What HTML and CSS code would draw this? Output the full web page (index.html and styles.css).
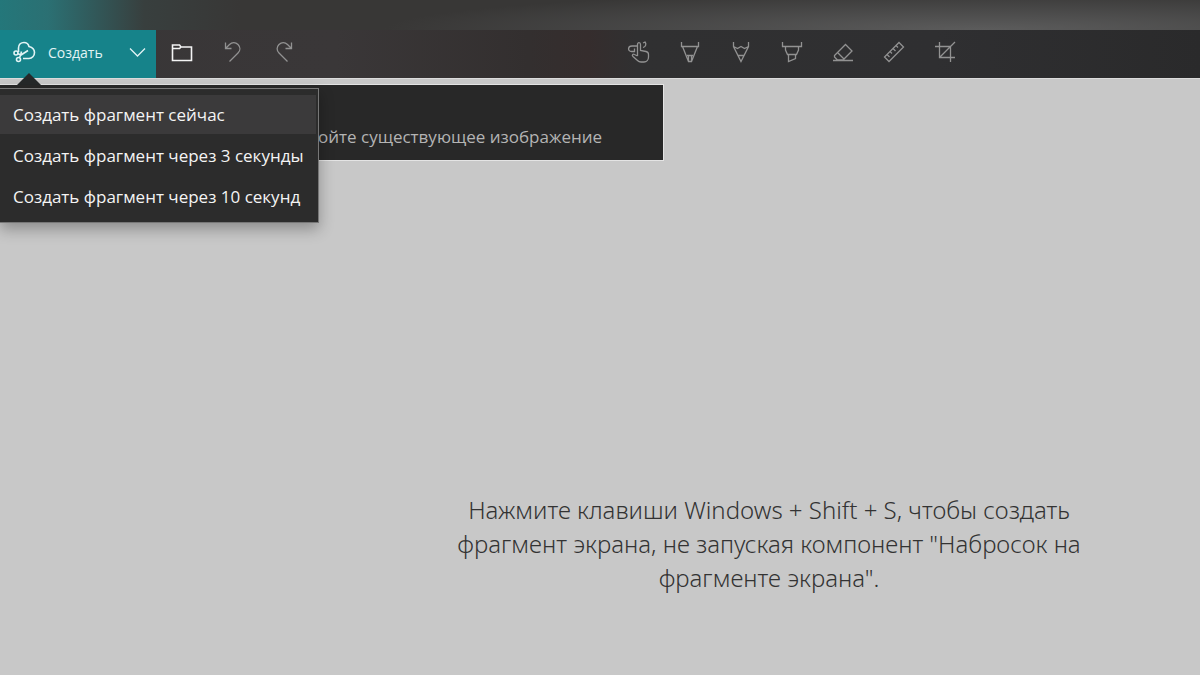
FILE: index.html
```html
<!DOCTYPE html>
<html lang="ru">
<head>
<meta charset="utf-8">
<meta name="viewport" content="width=device-width, initial-scale=1">
<title>Набросок на фрагменте экрана</title>
<link rel="stylesheet" href="styles.css">
</head>
<body>
<div class="app">
  <header class="titlebar"></header>
  <nav class="toolbar">
    <div class="create">
      <button class="create-main" type="button">
        <svg class="icon scissors" viewBox="0 0 24 24" aria-hidden="true">
          <path d="M6.500 12V8C6.500 4.500 9 2.500 12 2.500C15 2.500 16.500 4.500 17 6.500C20.500 7.500 22.500 9.500 22.500 12.500C22.500 16 20 18.500 17 18.500H11"/>
          <path d="M5.500 13.500L9 15L16 10.500M7.500 17.500L8.500 15.500L9.500 11.500"/>
          <circle cx="4" cy="13" r="2"/><circle cx="6.500" cy="19.500" r="2"/>
        </svg>
        <span>Создать</span>
      </button>
      <button class="create-more" type="button" aria-label="Параметры создания" aria-expanded="true">
        <svg class="icon" viewBox="0 0 24 24" aria-hidden="true"><path d="M5 8.500L12.500 16L20 8.500"/></svg>
      </button>
      <div class="menu" role="menu">
        <button class="menu-item active" type="button" role="menuitem">Создать фрагмент сейчас</button>
        <button class="menu-item" type="button" role="menuitem">Создать фрагмент через 3 секунды</button>
        <button class="menu-item" type="button" role="menuitem">Создать фрагмент через 10 секунд</button>
      </div>
    </div>
    <div class="group">
      <button class="tool enabled" type="button" aria-label="Открыть файл">
        <svg class="icon folder" viewBox="0 0 24 24" aria-hidden="true"><path d="M2.500 5H9.500L11 7H21.500V20.500H2.500ZM2.500 8.500H9.500L11 7"/></svg>
      </button>
      <button class="tool" type="button" aria-label="Отменить">
        <svg class="icon" viewBox="0 0 24 24" aria-hidden="true"><path d="M4.500 2.500V8.500H10.500M4.500 8.500L8.500 4.500C11 2 14.500 2 17 4.500C19.500 7 19.500 10.500 17 13L8.500 21.500"/></svg>
      </button>
      <button class="tool" type="button" aria-label="Вернуть">
        <svg class="icon" viewBox="0 0 24 24" aria-hidden="true"><path d="M19.500 2.500V8.500H13.500M19.500 8.500L15.500 4.500C13 2 9.500 2 7 4.500C4.500 7 4.500 10.500 7 13L15.500 21.500"/></svg>
      </button>
    </div>
    <div class="group drawing">
      <button class="tool" type="button" aria-label="Рукописный ввод касанием">
        <svg class="icon" viewBox="0 0 24 24" aria-hidden="true"><path d="M10.500 16V4.500C10.500 2 13.500 2 13.500 4.500V10.500L19 11.500C21 12 21.500 13 21.500 14.500V17C21.500 20 19.500 22 17 22H14C12.500 22 11.500 21.500 10.500 20.500L6 16.500C4.500 15 6 13.500 7.500 14.500L10.500 16M10.500 6H5C.500 6 .500 11.500 4.500 11.500H7.500V8.500M16 3L18 2C19.500 4 19 6.500 16 7.500"/></svg>
      </button>
      <button class="tool" type="button" aria-label="Ручка">
        <svg class="icon" viewBox="0 0 24 24" aria-hidden="true"><path d="M3.500 2V6.500H20.500V2M4.500 6.500L10.500 21.500H13.500L19.500 6.500M9 15.500H15M10.500 16V21.500M13.500 16V21.500"/></svg>
      </button>
      <button class="tool" type="button" aria-label="Карандаш">
        <svg class="icon" viewBox="0 0 24 24" aria-hidden="true"><path d="M4.500 2V6.500L12 21.500L19.500 6.500V2M4.500 6.500L8.500 8.500L12 6.500L15.500 8.500L19.500 6.500M9 15.500H15"/></svg>
      </button>
      <button class="tool" type="button" aria-label="Маркер">
        <svg class="icon" viewBox="0 0 24 24" aria-hidden="true"><path d="M2.500 2V6.500H21.500V2M5.500 6.500V10L7.500 14.500H16.500L18.500 10V6.500M8.500 14.500V21.500L15.500 18.500V14.500"/></svg>
      </button>
      <button class="tool" type="button" aria-label="Ластик">
        <svg class="icon" viewBox="0 0 24 24" aria-hidden="true"><path d="M14.500 4.500L21 11L12 20H6.500L3.500 17V15.500ZM6.500 12.500L13 19M2 20.500H22"/></svg>
      </button>
      <button class="tool" type="button" aria-label="Линейка">
        <svg class="icon" viewBox="0 0 24 24" aria-hidden="true"><path d="M17 2.500L21.500 7L7 21.500L2.500 17ZM5 14.500L7.500 17M8 11.500L10 13.500M11 8.500L13.500 11M14 5.500L16 7.500"/></svg>
      </button>
      <button class="tool" type="button" aria-label="Обрезка">
        <svg class="icon" viewBox="0 0 24 24" aria-hidden="true"><path d="M2 6.500H17.500V22M6.500 2V17.500H22M6.500 17.500L22 2"/></svg>
      </button>
    </div>
  </nav>
  <main class="canvas">
    <p class="tip">ойте существующее изображение</p>
    <p class="hint">Нажмите клавиши Windows + Shift + S, чтобы создать фрагмент экрана, не запуская компонент "Набросок на фрагменте экрана".</p>
  </main>
</div>
</body>
</html>
```

FILE: styles.css
```css
* { box-sizing: border-box; }

body {
  margin: 0;
  background: #c8c8c8;
  font-family: "Open Sans", "Noto Sans", sans-serif;
}

button {
  margin: 0;
  padding: 0;
  border: 0;
  background: none;
  color: inherit;
  font: inherit;
}

.app {
  display: flex;
  flex-direction: column;
  min-height: 100vh;
}

.titlebar {
  height: 30px;
  background:
    linear-gradient(90deg, #24777a 0, #2b7073 4%, rgba(56, 64, 63, 0.9) 12%, rgba(56, 55, 54, 0) 20%),
    radial-gradient(ellipse 50% 130% at 82% 100%, #5c5c5c, rgba(76, 76, 76, 0.7) 60%, rgba(56, 55, 54, 0)),
    #383736;
}

.toolbar {
  display: flex;
  height: 48px;
  background: linear-gradient(90deg, #383637 0, #3a3738 28%, #332f2f 44%, #352d2d 49%, #303031 53%, #2f2f31 78%, #2a2a2b 100%);
}

.create {
  position: relative;
  display: flex;
  width: 156px;
  background: #16838a;
  color: #e2f4f5;
}

.create::after {
  content: "";
  position: absolute;
  left: 17px;
  top: 43px;
  border: solid transparent;
  border-width: 0 12px 12px;
  border-bottom-color: #252829;
}

.create-main {
  display: flex;
  flex: 1;
  align-items: center;
  gap: 12px;
  padding-left: 12px;
  padding-bottom: 4px;
  font-size: 14px;
}

.create-more,
.tool {
  display: flex;
  align-items: center;
  justify-content: center;
  padding-bottom: 4px;
}

.create-more { width: 38px; }

.icon {
  display: block;
  flex: none;
  width: 24px;
  height: 24px;
  fill: none;
  stroke: currentColor;
  stroke-width: 1.3;
}

.scissors { stroke-width: 1.6; }

.group { display: flex; }

.drawing { margin-left: 25.400%; }

.tool {
  width: 51px;
  color: #929292;
}

.enabled { color: #f4f4f4; }

.folder { stroke-width: 1.6; }

.menu {
  position: absolute;
  z-index: 2;
  top: 58px;
  left: 0;
  display: flex;
  flex-direction: column;
  gap: 2px;
  width: 319px;
  padding: 6px 2px 6px 0;
  border: 1px solid #777;
  border-left: 0;
  background: #2c2c2c;
  box-shadow: 0 6px 14px rgba(0, 0, 0, 0.3);
  color: #f4f4f4;
}

.menu-item {
  height: 39px;
  padding-left: 13px;
  padding-bottom: 1px;
  font-size: 17px;
  text-align: left;
  white-space: nowrap;
}

.active { background: #3b3a3b; }

.canvas {
  display: flex;
  flex: 1;
  flex-direction: column;
  justify-content: space-between;
  padding: 5px 0 80px;
  border-top: 1px solid #dcdcdc;
}

.tip {
  width: 664px;
  max-width: 100%;
  margin: 0;
  padding: 40px 0 11px 318px;
  border: 1px solid #e4e4e4;
  border-left: 0;
  background: #282828;
  color: #b4b4b4;
  font-size: 17px;
  line-height: 24px;
}

.hint {
  width: 650px;
  max-width: 100%;
  margin: 0 0 0 37%;
  color: #333;
  font-family: "Noto Sans", "Open Sans", sans-serif;
  font-size: 24px;
  font-weight: 300;
  line-height: 34px;
  text-align: center;
}
```
